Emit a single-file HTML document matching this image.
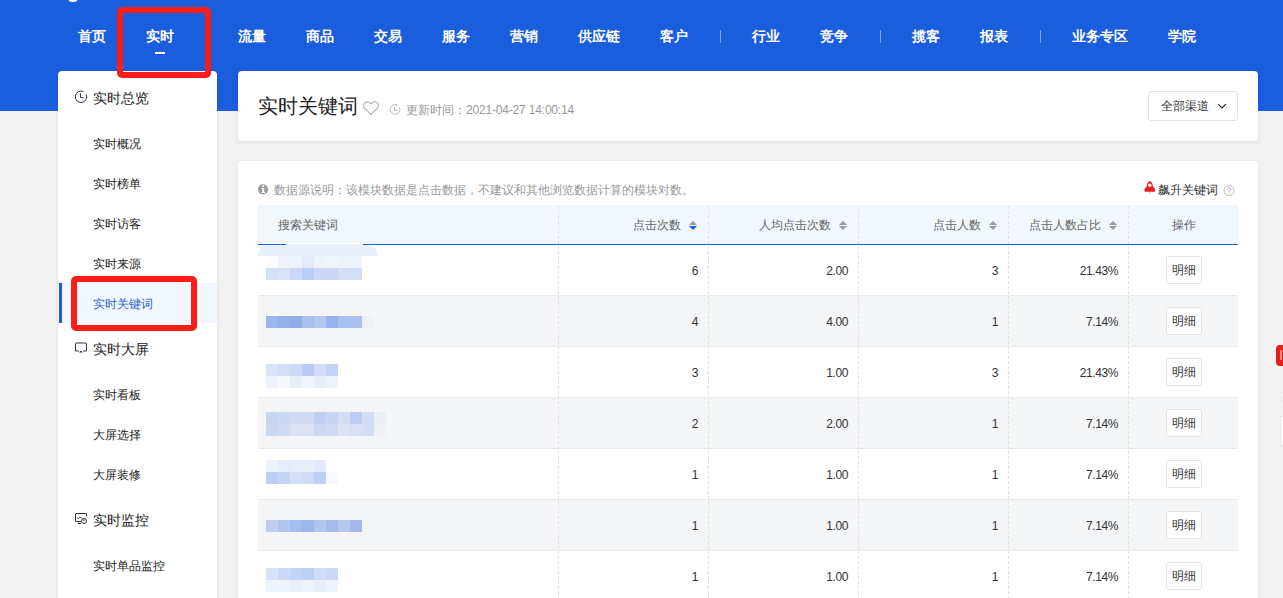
<!DOCTYPE html>
<html><head><meta charset="utf-8">
<style>
*{margin:0;padding:0;box-sizing:border-box}
html,body{width:1283px;height:598px;overflow:hidden;background:#f2f2f2;font-family:"Liberation Sans",sans-serif;color:#333}
.abs{position:absolute}
#top{position:absolute;left:0;top:0;width:1283px;height:111px;background:#1a5ddd}
.nav{position:absolute;top:27px;font-size:14px;line-height:18px;color:#fff;font-weight:bold;white-space:nowrap}
.sep{position:absolute;top:30px;width:1px;height:13px;background:rgba(255,255,255,.45)}
.card{position:absolute;background:#fff;border-radius:4px;box-shadow:0 1px 4px rgba(0,0,0,.09)}
.side-item{position:absolute;left:93px;font-size:12px;line-height:16px;color:#222;white-space:nowrap}
.side-head{position:absolute;left:93px;font-size:14px;line-height:18px;color:#222;white-space:nowrap}
.redbox{position:absolute;border:6px solid #fa1e16;border-radius:5px}
.th{position:absolute;top:206px;height:38px;line-height:38px;font-size:12px;color:#666;white-space:nowrap}
.row{position:absolute;left:258px;width:980px;height:51px;border-bottom:1px solid #e8e8e8}
.cell{position:absolute;font-size:12px;line-height:16px;color:#333;white-space:nowrap;text-align:right;letter-spacing:-0.4px}
.btn{position:absolute;left:1166px;width:36px;height:28px;border:1px solid #e3e3e3;border-radius:3px;background:#fff;font-size:12px;line-height:27px;text-align:center;color:#333}
.vl{position:absolute;top:205px;width:1px;height:393px;background-image:linear-gradient(to bottom,#e2e2e2 0,#e2e2e2 3px,transparent 3px,transparent 5px);background-size:1px 5px;background-position:0 1px}
.blk{position:absolute;width:12px;height:12px}
</style></head><body>
<div id="top"></div>
<div class="abs" style="left:68px;top:-3px;width:10px;height:4.5px;border-radius:0 0 4px 4px;background:#fff"></div>
<div class="nav" style="left:78px">首页</div>
<div class="nav" style="left:146px">实时</div>
<div class="abs" style="left:155px;top:52px;width:10px;height:2px;background:#fff"></div>
<div class="nav" style="left:238px">流量</div>
<div class="nav" style="left:306px">商品</div>
<div class="nav" style="left:374px">交易</div>
<div class="nav" style="left:442px">服务</div>
<div class="nav" style="left:510px">营销</div>
<div class="nav" style="left:578px">供应链</div>
<div class="nav" style="left:660px">客户</div>
<div class="sep" style="left:720px"></div>
<div class="nav" style="left:752px">行业</div>
<div class="nav" style="left:820px">竞争</div>
<div class="sep" style="left:880px"></div>
<div class="nav" style="left:912px">揽客</div>
<div class="nav" style="left:980px">报表</div>
<div class="sep" style="left:1040px"></div>
<div class="nav" style="left:1072px">业务专区</div>
<div class="nav" style="left:1168px">学院</div>

<!-- sidebar -->
<div class="card" style="left:58px;top:71px;width:159px;height:600px"></div>
<svg class="abs" style="left:74px;top:90px" width="14" height="14" viewBox="0 0 14 14"><path d="M12.17 4.39A5.7 5.7 0 1 1 9.41 1.63" fill="none" stroke="#333" stroke-width="1"/><path d="M6.5 3.4V7.6H9.6" fill="none" stroke="#333" stroke-width="1"/></svg>
<div class="side-head" style="top:89px">实时总览</div>
<div class="side-item" style="top:136px">实时概况</div>
<div class="side-item" style="top:176px">实时榜单</div>
<div class="side-item" style="top:216px">实时访客</div>
<div class="side-item" style="top:256px">实时来源</div>
<div class="abs" style="left:58px;top:283px;width:159px;height:40px;background:#f2f6fe"></div>
<div class="abs" style="left:59px;top:283px;width:3px;height:40px;background:#1a5ddd"></div>
<div class="side-item" style="top:296px;color:#2c63d8">实时关键词</div>
<svg class="abs" style="left:74px;top:341px" width="14" height="14" viewBox="0 0 14 14"><path d="M5 10H1.5V2.5Q1.5 2 2 2H12Q12.5 2 12.5 2.5V10H9" fill="none" stroke="#333" stroke-width="1"/><path d="M5.2 11.6L7 9.4L8.8 11.6Z" fill="#222"/></svg>
<div class="side-head" style="top:340px">实时大屏</div>
<div class="side-item" style="top:387px">实时看板</div>
<div class="side-item" style="top:427px">大屏选择</div>
<div class="side-item" style="top:467px">大屏装修</div>
<svg class="abs" style="left:74px;top:511px" width="14" height="14" viewBox="0 0 14 14"><path d="M7 10.5H1.5V3Q1.5 2.5 2 2.5H12Q12.5 2.5 12.5 3V5" fill="none" stroke="#333" stroke-width="1"/><path d="M2.8 6.4L4.3 7.6L6 6.2L7.8 6.9" fill="none" stroke="#333" stroke-width="0.9"/><circle cx="10" cy="9.9" r="2.5" fill="none" stroke="#333" stroke-width="1"/><path d="M10 8.4V10.2" stroke="#333" stroke-width="1"/><path d="M3.5 12.5H7" stroke="#333" stroke-width="1"/></svg>
<div class="side-head" style="top:511px">实时监控</div>
<div class="side-item" style="top:558px">实时单品监控</div>

<!-- header card -->
<div class="card" style="left:238px;top:71px;width:1020px;height:70px"></div>
<div class="abs" style="left:258px;top:94px;font-size:20px;line-height:24px;color:#222">实时关键词</div>
<svg class="abs" style="left:362px;top:100px" width="18" height="16" viewBox="0 0 18 16"><path d="M9 14.4L2.3 7.8C1.2 6.6 1.2 3.6 3.2 2.4C5 1.4 7.6 1.8 9 4C10.4 1.8 13 1.4 14.8 2.4C16.8 3.6 16.8 6.6 15.7 7.8Z" fill="none" stroke="#aaa" stroke-width="1.05" stroke-linejoin="round"/></svg>
<svg class="abs" style="left:389px;top:103px" width="12" height="13" viewBox="0 0 12 13"><path d="M10.44 4.43A4.9 4.9 0 1 1 8.07 2.06" fill="none" stroke="#bbb" stroke-width="1"/><path d="M5.5 3.8V7.3H8.5" fill="none" stroke="#bbb" stroke-width="1"/></svg>
<div class="abs" style="left:406px;top:102px;font-size:12px;line-height:16px;color:#999;white-space:nowrap">更新时间：<span style="letter-spacing:-0.18px">2021-04-27 14:00:14</span></div>
<div class="abs" style="left:1148px;top:91px;width:90px;height:30px;border:1px solid #e3e3e3;border-radius:3px;background:#fff"></div>
<div class="abs" style="left:1161px;top:98px;font-size:12px;line-height:16px;color:#333;white-space:nowrap">全部渠道</div>
<svg class="abs" style="left:1217px;top:102px" width="10" height="8" viewBox="0 0 10 8"><path d="M1.2 2.2L5 6L8.8 2.2" fill="none" stroke="#222" stroke-width="1.1"/></svg>

<!-- table card -->
<div class="card" style="left:238px;top:161px;width:1020px;height:500px"></div>
<svg class="abs" style="left:258px;top:184px" width="11" height="11" viewBox="0 0 11 11"><circle cx="5" cy="5.3" r="5.1" fill="#9a9a9a"/><rect x="4.2" y="1.3" width="2" height="1.8" fill="#fff"/><path d="M3.4 4H6.2V7.9H7V9H3.5V7.9H4.3V5H3.4Z" fill="#fff"/></svg>
<div class="abs" style="left:274px;top:182px;font-size:12px;line-height:16px;color:#999;white-space:nowrap">数据源说明：该模块数据是点击数据，不建议和其他浏览数据计算的模块对数。</div>
<svg class="abs" style="left:1144px;top:180px" width="12" height="15" viewBox="0 0 12 15"><path d="M5.8 0.9C7.8 1.8 8.8 3.8 8.9 6.4L10.7 8.5C11.1 9 11.2 10 11 11.8H0.6C0.4 10 0.5 9 0.9 8.5L2.7 6.4C2.8 3.8 3.8 1.8 5.8 0.9Z" fill="#e3201c"/><circle cx="5.8" cy="5.3" r="1.7" fill="#fff"/><rect x="4.7" y="12.3" width="2.2" height="1.6" fill="#f6c4b4"/></svg>
<div class="abs" style="left:1158px;top:182px;font-size:12px;line-height:16px;color:#333;white-space:nowrap">飙升关键词</div>
<svg class="abs" style="left:1223px;top:185px" width="12" height="12" viewBox="0 0 12 12"><circle cx="6" cy="5.6" r="5" fill="none" stroke="#bdbdbd" stroke-width="1"/><path d="M4.4 4.3C4.4 3.3 5.1 2.8 6 2.8C6.9 2.8 7.6 3.3 7.6 4.2C7.6 5.2 6.1 5.4 6.1 6.6V7" fill="none" stroke="#b0b0b0" stroke-width="1"/><rect x="5.6" y="7.8" width="1" height="1.1" fill="#b0b0b0"/></svg>

<div class="abs" style="left:258px;top:205px;width:980px;height:38px;background:#f2f6fd"></div>
<div class="abs" style="left:258px;top:244px;width:980px;height:1px;background:#1a5ddd"></div>
<div class="th" style="left:278px">搜索关键词</div>

<div class="abs" style="left:1276px;top:345px;width:12px;height:21px;border-radius:4px;background:#e3201b"></div>
<div class="abs" style="left:1280px;top:350px;width:2px;height:10px;background:rgba(255,255,255,.5)"></div>
<div class="abs" style="left:1281px;top:392px;width:10px;height:10px;border-radius:50%;border:1px solid #fff;box-shadow:0 0 2px rgba(0,0,0,.15)"></div>
<div class="abs" style="left:1281px;top:416px;width:12px;height:30px;border-radius:4px;background:#fff;box-shadow:0 0 2px rgba(0,0,0,.15)"></div>
<div id="rows">
<div class="row" style="top:245px;background:#fff"></div>
<div class="row" style="top:296px;background:#f4f5f7"></div>
<div class="row" style="top:347px;background:#fff"></div>
<div class="row" style="top:398px;background:#f4f5f7"></div>
<div class="row" style="top:449px;background:#fff"></div>
<div class="row" style="top:500px;background:#f4f5f7"></div>
<div class="row" style="top:551px;background:#fff"></div>
<div class="blk" style="left:266px;top:256px;background:#fbfcfe"></div>
<div class="blk" style="left:278px;top:256px;background:#eef2fb"></div>
<div class="blk" style="left:290px;top:256px;background:#eef2fb"></div>
<div class="blk" style="left:302px;top:256px;background:#e3eafa"></div>
<div class="blk" style="left:314px;top:256px;background:#eef2fb"></div>
<div class="blk" style="left:326px;top:256px;background:#f0f4fb"></div>
<div class="blk" style="left:338px;top:256px;background:#eef2fb"></div>
<div class="blk" style="left:350px;top:256px;background:#eef2fb"></div>
<div class="blk" style="left:266px;top:268px;background:#d3dff7"></div>
<div class="blk" style="left:278px;top:268px;background:#d8e2f7"></div>
<div class="blk" style="left:290px;top:268px;background:#c9d8f5"></div>
<div class="blk" style="left:302px;top:268px;background:#b9cff3"></div>
<div class="blk" style="left:314px;top:268px;background:#c9d8f5"></div>
<div class="blk" style="left:326px;top:268px;background:#cbd8f3"></div>
<div class="blk" style="left:338px;top:268px;background:#d3dff7"></div>
<div class="blk" style="left:350px;top:268px;background:#d3dff7"></div>
<div class="blk" style="left:266px;top:316px;background:#9ab6ec"></div>
<div class="blk" style="left:278px;top:316px;background:#93b0ea"></div>
<div class="blk" style="left:290px;top:316px;background:#8fade9"></div>
<div class="blk" style="left:302px;top:316px;background:#a9c0ee"></div>
<div class="blk" style="left:314px;top:316px;background:#b3c7ef"></div>
<div class="blk" style="left:326px;top:316px;background:#97b3eb"></div>
<div class="blk" style="left:338px;top:316px;background:#a9c0ee"></div>
<div class="blk" style="left:350px;top:316px;background:#a9c0ee"></div>
<div class="blk" style="left:362px;top:316px;background:#eef1f6"></div>
<div class="blk" style="left:266px;top:364px;background:#d9e3f7"></div>
<div class="blk" style="left:278px;top:364px;background:#d3def6"></div>
<div class="blk" style="left:290px;top:364px;background:#cddaf5"></div>
<div class="blk" style="left:302px;top:364px;background:#b9cdf2"></div>
<div class="blk" style="left:314px;top:364px;background:#d3def6"></div>
<div class="blk" style="left:326px;top:364px;background:#c3d3f4"></div>
<div class="blk" style="left:266px;top:376px;background:#eef2fc"></div>
<div class="blk" style="left:278px;top:376px;background:#f6f8fd"></div>
<div class="blk" style="left:290px;top:376px;background:#e9eefb"></div>
<div class="blk" style="left:302px;top:376px;background:#f1f4fc"></div>
<div class="blk" style="left:314px;top:376px;background:#e9eefb"></div>
<div class="blk" style="left:326px;top:376px;background:#eef2fb"></div>
<div class="blk" style="left:266px;top:412px;background:#c5d4f1"></div>
<div class="blk" style="left:278px;top:412px;background:#cbd8f2"></div>
<div class="blk" style="left:290px;top:412px;background:#d0dbf3"></div>
<div class="blk" style="left:302px;top:412px;background:#d0dbf3"></div>
<div class="blk" style="left:314px;top:412px;background:#bfcff0"></div>
<div class="blk" style="left:326px;top:412px;background:#c8d6f2"></div>
<div class="blk" style="left:338px;top:412px;background:#d3def4"></div>
<div class="blk" style="left:350px;top:412px;background:#bccdf1"></div>
<div class="blk" style="left:362px;top:412px;background:#d3def4"></div>
<div class="blk" style="left:374px;top:412px;background:#eceff5"></div>
<div class="blk" style="left:266px;top:424px;background:#c9d7f2"></div>
<div class="blk" style="left:278px;top:424px;background:#cfdaf3"></div>
<div class="blk" style="left:290px;top:424px;background:#dbe1f2"></div>
<div class="blk" style="left:302px;top:424px;background:#dbe1f2"></div>
<div class="blk" style="left:314px;top:424px;background:#ccd8f2"></div>
<div class="blk" style="left:326px;top:424px;background:#d0daf3"></div>
<div class="blk" style="left:338px;top:424px;background:#dde3f2"></div>
<div class="blk" style="left:350px;top:424px;background:#d7dff3"></div>
<div class="blk" style="left:362px;top:424px;background:#d3def3"></div>
<div class="blk" style="left:374px;top:424px;background:#eff1f5"></div>
<div class="blk" style="left:266px;top:460px;background:#edf1fc"></div>
<div class="blk" style="left:278px;top:460px;background:#e5ecfb"></div>
<div class="blk" style="left:290px;top:460px;background:#e9eefb"></div>
<div class="blk" style="left:302px;top:460px;background:#e9eefb"></div>
<div class="blk" style="left:314px;top:460px;background:#e3eafb"></div>
<div class="blk" style="left:266px;top:472px;background:#bcd0f3"></div>
<div class="blk" style="left:278px;top:472px;background:#c5d6f4"></div>
<div class="blk" style="left:290px;top:472px;background:#d3dff6"></div>
<div class="blk" style="left:302px;top:472px;background:#cfdcf6"></div>
<div class="blk" style="left:314px;top:472px;background:#bcd0f3"></div>
<div class="blk" style="left:326px;top:472px;background:#f8f9fe"></div>
<div class="blk" style="left:266px;top:520px;background:#bfcdf0"></div>
<div class="blk" style="left:278px;top:520px;background:#b1c5ee"></div>
<div class="blk" style="left:290px;top:520px;background:#a6bdec"></div>
<div class="blk" style="left:302px;top:520px;background:#9db6ea"></div>
<div class="blk" style="left:314px;top:520px;background:#b1c5ee"></div>
<div class="blk" style="left:326px;top:520px;background:#a6bdec"></div>
<div class="blk" style="left:338px;top:520px;background:#b6c8ee"></div>
<div class="blk" style="left:350px;top:520px;background:#a3bbec"></div>
<div class="blk" style="left:266px;top:568px;background:#d6e2f7"></div>
<div class="blk" style="left:278px;top:568px;background:#c9d9f6"></div>
<div class="blk" style="left:290px;top:568px;background:#c2d4f5"></div>
<div class="blk" style="left:302px;top:568px;background:#bdd1f4"></div>
<div class="blk" style="left:314px;top:568px;background:#d0ddf6"></div>
<div class="blk" style="left:326px;top:568px;background:#c9d9f6"></div>
<div class="blk" style="left:266px;top:580px;background:#eff3fd"></div>
<div class="blk" style="left:278px;top:580px;background:#eff3fd"></div>
<div class="blk" style="left:290px;top:580px;background:#ebf0fc"></div>
<div class="blk" style="left:302px;top:580px;background:#eff3fd"></div>
<div class="blk" style="left:314px;top:580px;background:#e8eefb"></div>
<div class="blk" style="left:326px;top:580px;background:#eff3fd"></div>
<div class="cell" style="right:585px;top:263px">6</div>
<div class="cell" style="right:435px;top:263px">2.00</div>
<div class="cell" style="right:285px;top:263px">3</div>
<div class="cell" style="right:165px;top:263px">21.43%</div>
<div class="btn" style="top:256px">明细</div>
<div class="cell" style="right:585px;top:314px">4</div>
<div class="cell" style="right:435px;top:314px">4.00</div>
<div class="cell" style="right:285px;top:314px">1</div>
<div class="cell" style="right:165px;top:314px">7.14%</div>
<div class="btn" style="top:307px">明细</div>
<div class="cell" style="right:585px;top:365px">3</div>
<div class="cell" style="right:435px;top:365px">1.00</div>
<div class="cell" style="right:285px;top:365px">3</div>
<div class="cell" style="right:165px;top:365px">21.43%</div>
<div class="btn" style="top:358px">明细</div>
<div class="cell" style="right:585px;top:416px">2</div>
<div class="cell" style="right:435px;top:416px">2.00</div>
<div class="cell" style="right:285px;top:416px">1</div>
<div class="cell" style="right:165px;top:416px">7.14%</div>
<div class="btn" style="top:409px">明细</div>
<div class="cell" style="right:585px;top:467px">1</div>
<div class="cell" style="right:435px;top:467px">1.00</div>
<div class="cell" style="right:285px;top:467px">1</div>
<div class="cell" style="right:165px;top:467px">7.14%</div>
<div class="btn" style="top:460px">明细</div>
<div class="cell" style="right:585px;top:518px">1</div>
<div class="cell" style="right:435px;top:518px">1.00</div>
<div class="cell" style="right:285px;top:518px">1</div>
<div class="cell" style="right:165px;top:518px">7.14%</div>
<div class="btn" style="top:511px">明细</div>
<div class="cell" style="right:585px;top:569px">1</div>
<div class="cell" style="right:435px;top:569px">1.00</div>
<div class="cell" style="right:285px;top:569px">1</div>
<div class="cell" style="right:165px;top:569px">7.14%</div>
<div class="btn" style="top:562px">明细</div>
<div class="vl" style="left:558px"></div>
<div class="vl" style="left:708px"></div>
<div class="vl" style="left:858px"></div>
<div class="vl" style="left:1008px"></div>
<div class="vl" style="left:1128px"></div>
<div class="th" style="left:633px">点击次数</div>
<svg class="abs" style="left:689px;top:221px" width="8" height="9" viewBox="0 0 8 9"><path d="M4 0L8 4H0Z" fill="#999"/><path d="M0 5H8L4 9Z" fill="#1a5ddd"/></svg>
<div class="th" style="left:759px">人均点击次数</div>
<svg class="abs" style="left:839px;top:221px" width="8" height="9" viewBox="0 0 8 9"><path d="M4 0L8 4H0Z" fill="#999"/><path d="M0 5H8L4 9Z" fill="#999"/></svg>
<div class="th" style="left:933px">点击人数</div>
<svg class="abs" style="left:989px;top:221px" width="8" height="9" viewBox="0 0 8 9"><path d="M4 0L8 4H0Z" fill="#999"/><path d="M0 5H8L4 9Z" fill="#999"/></svg>
<div class="th" style="left:1029px">点击人数占比</div>
<svg class="abs" style="left:1109px;top:221px" width="8" height="9" viewBox="0 0 8 9"><path d="M4 0L8 4H0Z" fill="#999"/><path d="M0 5H8L4 9Z" fill="#999"/></svg>
<div class="th" style="left:1172px">操作</div>
<div class="abs" style="left:258px;top:245px;width:120px;height:11px;border-radius:14px 16px 0 0;background:#e9effb"></div>
<div class="abs" style="left:286px;top:244px;width:77px;height:1px;background:#e9effb"></div>
<div class="redbox" style="left:117px;top:7px;width:94px;height:71px"></div>
<div class="redbox" style="left:71px;top:276px;width:126px;height:55px"></div>
</div>
</body></html>
